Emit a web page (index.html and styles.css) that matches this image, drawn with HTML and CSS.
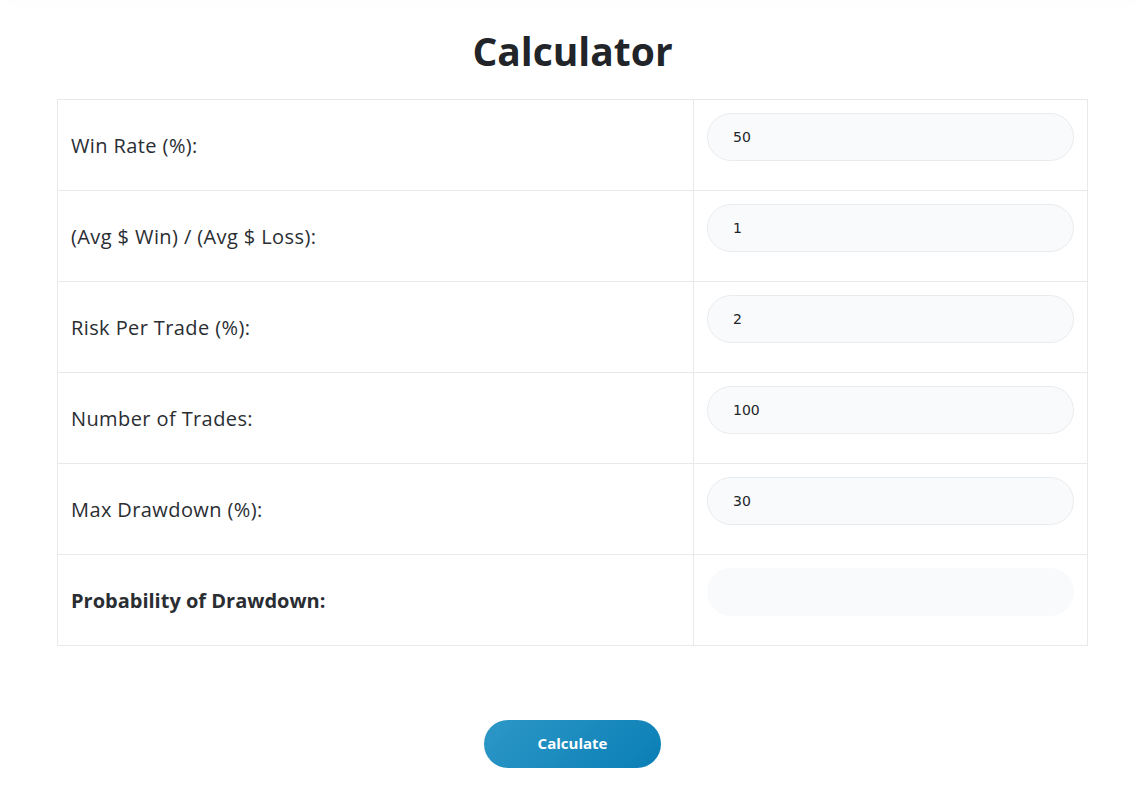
FILE: index.html
```html
<!DOCTYPE html>
<html lang="en">
<head>
    <meta charset="UTF-8">
    <meta name="viewport" content="width=device-width, initial-scale=1.0">
    <title>Calculator</title>
    <link rel="stylesheet" href="styles.css">
</head>
<body>
    <div class="topbar"></div>
    <div class="container">
        <h1>Calculator</h1>
        <div class="calc-table">
            <div class="cell label">Win Rate (%):</div>
            <div class="cell field"><input type="text" value="50"></div>

            <div class="cell label">(Avg $ Win) / (Avg $ Loss):</div>
            <div class="cell field"><input type="text" value="1"></div>

            <div class="cell label">Risk Per Trade (%):</div>
            <div class="cell field"><input type="text" value="2"></div>

            <div class="cell label">Number of Trades:</div>
            <div class="cell field"><input type="text" value="100"></div>

            <div class="cell label">Max Drawdown (%):</div>
            <div class="cell field"><input type="text" value="30"></div>

            <div class="cell label result">Probability of Drawdown:</div>
            <div class="cell field"><input type="text" class="output" readonly></div>
        </div>
        <div class="actions">
            <button class="calc-btn">Calculate</button>
        </div>
    </div>
</body>
</html>
```

FILE: styles.css
```css
* {
    margin: 0;
    padding: 0;
    box-sizing: border-box;
}

body {
    background: #fff;
    font-family: 'Open Sans', 'Lato', sans-serif;
    color: #212529;
}

.topbar {
    height: 1px;
    margin-top: -1px;
    box-shadow: 0 0 18px rgba(0, 0, 0, 0.1);
}

.container {
    padding: 0 56px 0 57px;
}

h1 {
    text-align: center;
    font-size: 39px;
    font-weight: 700;
    line-height: 48px;
    padding-top: 27px;
    margin-bottom: 24px;
    color: #212529;
}

.calc-table {
    display: grid;
    grid-template-columns: 636px 1fr;
    grid-auto-rows: 91px;
    border-top: 1px solid #e9e9e9;
    border-left: 1px solid #e9e9e9;
}

.cell {
    border-right: 1px solid #e9e9e9;
    border-bottom: 1px solid #e9e9e9;
}

.label {
    display: flex;
    align-items: center;
    padding: 0 13px;
    font-size: 20px;
    letter-spacing: 0.4px;
    color: #2a2e33;
}

.label.result {
    font-weight: 700;
    letter-spacing: 0;
}

.field {
    padding: 13px 13px 0 13px;
}

.field input {
    width: 100%;
    height: 48px;
    border: 1px solid #e9ecef;
    border-radius: 24px;
    background: #f9fafb;
    padding: 0 25px;
    font-family: 'DejaVu Sans', sans-serif;
    font-size: 14px;
    color: #212529;
    outline: none;
}

.field input.output {
    border-color: #f9fafb;
}

.actions {
    display: flex;
    justify-content: center;
    padding-top: 74px;
}

.calc-btn {
    width: 177px;
    height: 48px;
    border: none;
    border-radius: 24px;
    background: linear-gradient(135deg, #2d97c7, #0a7fb5);
    color: #fff;
    font-family: 'Open Sans', 'Lato', sans-serif;
    font-weight: 700;
    font-size: 15px;
    padding-bottom: 2px;
    cursor: pointer;
}
```
